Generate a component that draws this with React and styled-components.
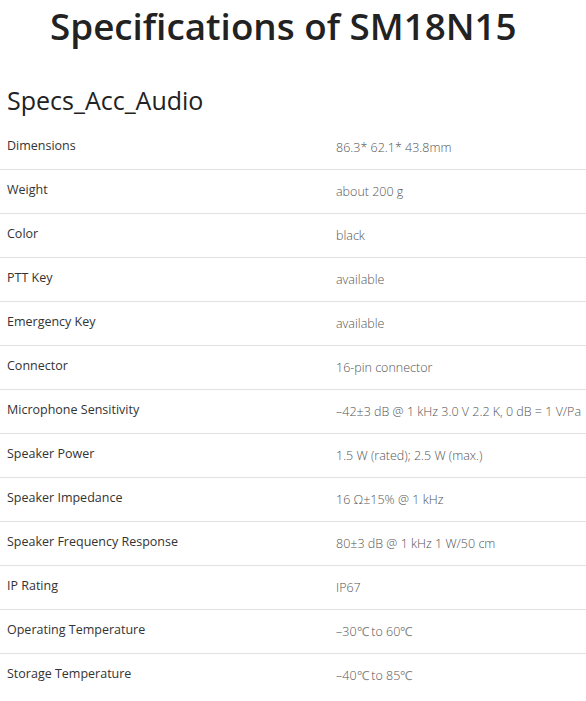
import React from 'react';
import styled, { createGlobalStyle } from 'styled-components';

const GlobalStyle = createGlobalStyle`
  html, body {
    margin: 0;
    padding: 0;
    background: #ffffff;
  }
  body {
    font-family: "Open Sans", "Liberation Sans", sans-serif;
    color: #222;
  }
`;

const Page = styled.div`
  width: 586px;
  overflow: hidden;
`;

const Title = styled.h1`
  margin: 0;
  padding: 0 0 0 50px;
  font-size: 36.8px;
  font-weight: 600;
  line-height: 52px;
  color: #222;
  white-space: nowrap;
`;

const SectionTitle = styled.h2`
  margin: 31px 0 0;
  padding: 0 7px;
  font-size: 25px;
  font-weight: 500;
  line-height: 34px;
  height: 43px;
  color: #222;
`;

const SpecList = styled.div`
  display: flex;
  flex-direction: column;
`;

const Row = styled.div`
  display: grid;
  grid-template-columns: 336px 1fr;
  box-sizing: border-box;
  height: 44px;
  border-bottom: ${({ $last }) => ($last ? 'none' : '1px solid #e2e2e2')};
`;

const Label = styled.div`
  padding: 11px 0 0 7px;
  font-size: 12.5px;
  line-height: 18px;
  font-weight: 500;
  color: #333;
  white-space: nowrap;
`;

const Value = styled.div`
  padding-top: 13px;
  font-size: 12.5px;
  line-height: 18px;
  font-weight: 300;
  color: #555;
  white-space: nowrap;
`;

// the degree sign comes from a fallback font without a light weight
const Unit = styled.span`
  color: #888;
  letter-spacing: -0.5px;
`;

const specs = [
  ['Dimensions', '86.3* 62.1* 43.8mm'],
  ['Weight', 'about 200 g'],
  ['Color', 'black'],
  ['PTT Key', 'available'],
  ['Emergency Key', 'available'],
  ['Connector', '16-pin connector'],
  ['Microphone Sensitivity', '–42±3 dB @ 1 kHz 3.0 V 2.2 K, 0 dB = 1 V/Pa'],
  ['Speaker Power', '1.5 W (rated); 2.5 W (max.)'],
  ['Speaker Impedance', '16 Ω±15% @ 1 kHz'],
  ['Speaker Frequency Response', '80±3 dB @ 1 kHz 1 W/50 cm'],
  ['IP Rating', 'IP67'],
  ['Operating Temperature', '–30℃ to 60℃'],
  ['Storage Temperature', '–40℃ to 85℃'],
];

const renderValue = (value) =>
  value.split('℃').map((part, i, arr) => (
    <React.Fragment key={i}>
      {part}
      {i < arr.length - 1 && <Unit>℃</Unit>}
    </React.Fragment>
  ));

export default function App() {
  return (
    <Page>
      <GlobalStyle />
      <Title>Specifications of SM18N15</Title>
      <SectionTitle>Specs_Acc_Audio</SectionTitle>
      <SpecList>
        {specs.map(([label, value], i) => (
          <Row key={label} $last={i === specs.length - 1}>
            <Label>{label}</Label>
            <Value>{renderValue(value)}</Value>
          </Row>
        ))}
      </SpecList>
    </Page>
  );
}
